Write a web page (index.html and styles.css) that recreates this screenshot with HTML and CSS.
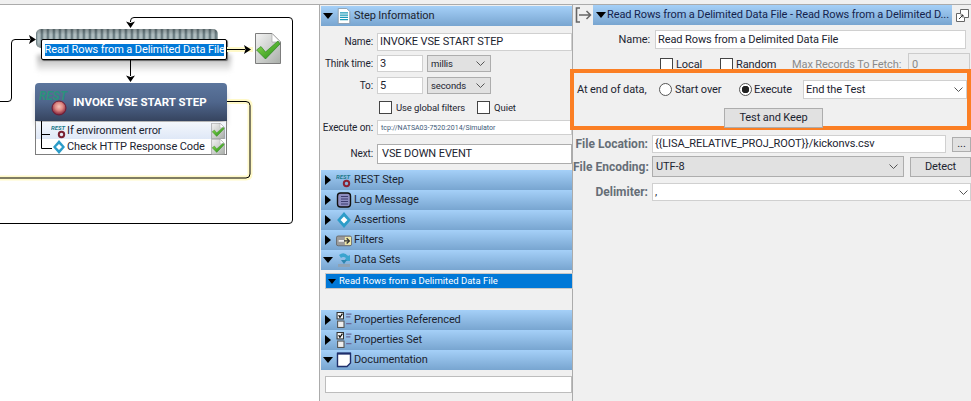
FILE: index.html
```html
<!DOCTYPE html>
<html lang="en">
<head>
<meta charset="utf-8">
<title>Step editor</title>
<link rel="stylesheet" href="styles.css">
</head>
<body>
<svg class="defs" width="0" height="0" aria-hidden="true">
  <defs>
    <linearGradient id="pageG" x1="0" y1="0" x2="1" y2="1"><stop offset="0" stop-color="#f4f4f4"/><stop offset="1" stop-color="#a9aea9"/></linearGradient>
    <linearGradient id="tickG" x1="0" y1="0" x2="1" y2="1"><stop offset="0" stop-color="#8fdc4e"/><stop offset="1" stop-color="#1f8a16"/></linearGradient>
    <radialGradient id="redG" cx="0.5" cy="0.4" r="0.6"><stop offset="0" stop-color="#f6c3b8"/><stop offset="0.45" stop-color="#e08a84"/><stop offset="1" stop-color="#7b1c35"/></radialGradient>
    <symbol id="ok" viewBox="0 0 26 31">
      <path d="M.5.5H17L25.5 9V30.5H.5Z" fill="url(#pageG)" stroke="#7d7d7d"/>
      <path d="M17 .5V9H25.5Z" fill="#fff" stroke="#9a9a9a" stroke-width=".6"/>
      <path d="M1.5 17L6 13.5 10.5 19 23 8 25 11 10.5 26Z" fill="url(#tickG)" stroke="#1f7a16" stroke-width=".6"/>
    </symbol>
    <symbol id="diamond" viewBox="0 0 12 14">
      <path d="M6 0L12 7 6 14 0 7Z" fill="#2c9cc8"/>
      <path d="M6 4L9 7 6 10 3 7Z" fill="#fff"/>
    </symbol>
    <symbol id="props" viewBox="0 0 14 15">
      <rect x=".5" y=".5" width="6" height="6" fill="#fff" stroke="#333"/>
      <path d="M2 3L3.2 5 5.5 1.5" fill="none" stroke="#111" stroke-width="1.2"/>
      <rect x="1" y="8.500" width="6" height="6" fill="#eee" stroke="#555"/>
      <path d="M9 2H14M9 4.500H13M9 11H14" stroke="#6a6a9a" stroke-width="1.200"/>
    </symbol>
  </defs>
</svg>
<div class="app">
  <main class="canvas">
    <div class="coil"></div>
    <div class="node-shadow"></div>
    <div class="node"><span class="node-sel">Read Rows from a Delimited Data File</span></div>
    <svg class="ok-big" aria-hidden="true"><use href="#ok"/></svg>

    <div class="rest">
      <div class="rest-head">
        <svg class="rest-logo" viewBox="0 0 40 34" aria-hidden="true">
          <text x="0" y="15" class="rest-word" textLength="28" lengthAdjust="spacingAndGlyphs">REST</text>
          <circle cx="20" cy="23" r="7" fill="url(#redG)" stroke="#6d1b33" stroke-width="1"/>
        </svg>
        <span class="rest-title">INVOKE VSE START STEP</span>
      </div>
      <div class="rest-list">
        <div class="rest-row rest-row-a">
          <svg class="rest-mini" viewBox="0 0 16 16" aria-hidden="true">
            <text x="0" y="7" class="rest-word-small">REST</text>
            <circle cx="10.500" cy="11.500" r="2.700" fill="none" stroke="#7b2233" stroke-width="2"/>
          </svg>
          <span>If environment error</span>
          <svg class="ok-small" aria-hidden="true"><use href="#ok"/></svg>
        </div>
        <div class="rest-row">
          <svg class="diamond-mini" aria-hidden="true"><use href="#diamond"/></svg>
          <span>Check HTTP Response Code</span>
          <svg class="ok-small" aria-hidden="true"><use href="#ok"/></svg>
        </div>
      </div>
    </div>

    <svg class="wires" width="319" height="396" viewBox="0 5 319 396" aria-hidden="true">
      <g fill="none" stroke="#fff9c8" stroke-width="5">
        <path d="M227 49.500H253"/>
        <path d="M227 101.500H246Q250 101.500 250 105.500V174Q250 178 246 178H0"/>
      </g>
      <g fill="none" stroke="#000" stroke-width="1">
        <path d="M0 101.500H8Q11.500 101.500 11.500 98V43Q11.500 39.500 15 39.500H30"/>
        <path d="M130.500 22V21Q130.500 17.500 134 17.500H289Q292.500 17.500 292.500 21V220Q292.500 223.500 289 223.500H0"/>
        <path d="M130.500 60V76"/>
        <path d="M227 49.500H245"/>
        <path d="M227 101.500H246Q250 101.500 250 105.500V174Q250 178 246 178H0"/>
        <path d="M41.500 121V148.500H52M41.500 134.500H50"/>
      </g>
      <path d="M29 35L36 39.500 29 44 30.500 39.500ZM126 21.500L130.500 28 135 21.500 130.500 23ZM126 75.500L130.500 82 135 75.500 130.500 77ZM244 45L251 49.500 244 54 245.500 49.500Z" fill="#000"/>
    </svg>
  </main>

  <section class="steps">
    <header class="bar bar-first">
      <i class="tri tri-down"></i>
      <svg class="bar-icon" viewBox="0 0 16 18" aria-hidden="true">
        <path d="M1.500.5H11L14.500 4V17.500H1.500Z" fill="#fff" stroke="#8a9aa8"/>
        <path d="M3.500 5.500H12.500M3.500 8H12.500M3.500 10.500H12.500M3.500 13H12.500" stroke="#1b9ab8" stroke-width="1.400"/>
      </svg>
      <span>Step Information</span>
    </header>
    <div class="info">
      <div class="row row-name"><label class="lab">Name:</label><div class="field grow">INVOKE VSE START STEP</div></div>
      <div class="row row-think"><label class="lab">Think time:</label><div class="field small">3</div><div class="pick">millis<svg class="chev" viewBox="0 0 9 5" aria-hidden="true"><path d="M.5.5L4.500 4.500 8.500.5"/></svg></div></div>
      <div class="row row-to"><label class="lab">To:</label><div class="field small">5</div><div class="pick">seconds<svg class="chev" viewBox="0 0 9 5" aria-hidden="true"><path d="M.5.5L4.500 4.500 8.500.5"/></svg></div></div>
      <div class="row row-checks"><i class="box box-a"></i><span>Use global filters</span><i class="box box-b"></i><span>Quiet</span></div>
      <div class="row row-exec"><label class="lab">Execute on:</label><div class="field grow tiny">tcp://NATSA03-7520:2014/Simulator</div></div>
      <div class="row row-next"><label class="lab">Next:</label><div class="field grow next">VSE DOWN EVENT</div></div>
    </div>
    <header class="bar"><i class="tri"></i>
      <svg class="bar-icon" viewBox="0 0 16 16" aria-hidden="true"><text x="0" y="7" class="rest-word-small">REST</text><circle cx="10.500" cy="11.500" r="2.700" fill="none" stroke="#8a2233" stroke-width="2"/></svg>
      <span>REST Step</span></header>
    <header class="bar"><i class="tri"></i>
      <svg class="bar-icon" viewBox="0 0 16 16" aria-hidden="true"><rect x="1.500" y="1" width="13" height="14" rx="3" fill="#8d8dc0" stroke="#111" stroke-width="1.400"/><path d="M5 4.500H12M5 7H12M5 9.500H12M5 12H12" stroke="#3d3d70"/></svg>
      <span>Log Message</span></header>
    <header class="bar"><i class="tri"></i>
      <svg class="bar-icon" aria-hidden="true"><use href="#diamond"/></svg>
      <span>Assertions</span></header>
    <header class="bar"><i class="tri"></i>
      <svg class="bar-icon" viewBox="0 0 18 14" aria-hidden="true"><rect x=".5" y="2.500" width="17" height="11" rx="2" fill="#9b9b9b" stroke="#666"/><rect x="10" y="3.500" width="7" height="9" fill="#efe9a8"/><path d="M3 8H9" stroke="#eee" stroke-width="2"/><path d="M9 8H14M12 5L15 8 12 11" fill="none" stroke="#333" stroke-width="1.500"/></svg>
      <span>Filters</span></header>
    <header class="bar"><i class="tri tri-down"></i>
      <svg class="bar-icon" viewBox="0 0 16 16" aria-hidden="true"><path d="M2 12H14V15H2Z" fill="#8fa3b5"/><path d="M3 3Q8 -1 12 4L14 3V9H8L10 6Q7 4 5 6Z" fill="#3aa4cf"/><path d="M5 8L8 12 11 8Z" fill="#2e86b0"/></svg>
      <span>Data Sets</span></header>
    <div class="sets">
      <div class="set-row"><i class="tri tri-down tri-set"></i><span>Read Rows from a Delimited Data File</span></div>
    </div>
    <header class="bar"><i class="tri"></i><svg class="bar-icon" aria-hidden="true"><use href="#props"/></svg><span>Properties Referenced</span></header>
    <header class="bar"><i class="tri"></i><svg class="bar-icon" aria-hidden="true"><use href="#props"/></svg><span>Properties Set</span></header>
    <header class="bar"><i class="tri tri-down"></i>
      <svg class="bar-icon" viewBox="0 0 16 16" aria-hidden="true"><path d="M1.500 1.500H14.500V11L11 14.500H1.500Z" fill="#fff" stroke="#1f2f6b" stroke-width="1.400"/><path d="M1 1.500H15" stroke="#1f2f6b" stroke-width="2"/></svg>
      <span>Documentation</span></header>
    <div class="doc"><div class="doc-field"></div></div>
  </section>

  <section class="detail">
    <div class="detail-top">
      <svg class="collapse" viewBox="0 0 17 16" aria-hidden="true"><path d="M5 1H1.500V15H5" fill="none" stroke="#666" stroke-width="1.600"/><path d="M4 8H15.500M11.500 4L15.500 8 11.500 12" fill="none" stroke="#666" stroke-width="1.500"/></svg>
      <div class="detail-bar"><i class="tri tri-down"></i><span class="detail-title">Read Rows from a Delimited Data File - Read Rows from a Delimited D...</span></div>
      <svg class="popout" viewBox="0 0 13 13" aria-hidden="true"><path d="M.5 4.500H8.500V12.500H.5Z" fill="#fff" stroke="#666"/><path d="M4.500 4V.5H12.500V8.500H9" fill="#fff" stroke="#666"/><path d="M3 10L7 6M4.500 6H7V8.500" fill="none" stroke="#333"/></svg>
    </div>
    <div class="d-name"><label class="d-lab">Name:</label><div class="field d-name-field">Read Rows from a Delimited Data File</div></div>
    <div class="d-checks">
      <i class="box"></i><span class="d-local">Local</span><i class="box"></i><span class="d-random">Random</span>
      <span class="muted">Max Records To Fetch:</span><div class="max-field">0</div>
    </div>
    <div class="callout">
      <div class="callout-row">
        <span class="end-label">At end of data,</span>
        <i class="radio"></i><span class="r-start">Start over</span>
        <i class="radio radio-on"></i><span class="r-exec">Execute</span>
        <div class="field end-pick">End the Test<svg class="chev" viewBox="0 0 9 5" aria-hidden="true"><path d="M.5.5L4.500 4.500 8.500.5"/></svg></div>
      </div>
      <div class="callout-btn"><div class="btn test-btn">Test and Keep</div></div>
    </div>
    <div class="f-row f-loc"><label class="f-lab">File Location:</label><div class="field f-path">{{LISA_RELATIVE_PROJ_ROOT}}/kickonvs.csv</div><div class="btn dots">...</div></div>
    <div class="f-row f-enc"><label class="f-lab">File Encoding:</label><div class="pick f-utf">UTF-8<svg class="chev" viewBox="0 0 9 5" aria-hidden="true"><path d="M.5.5L4.500 4.500 8.500.5"/></svg></div><div class="btn detect">Detect</div></div>
    <div class="f-row f-del"><label class="f-lab">Delimiter:</label><div class="field f-delim">,<svg class="chev" viewBox="0 0 9 5" aria-hidden="true"><path d="M.5.5L4.500 4.500 8.500.5"/></svg></div></div>
  </section>
</div>
</body>
</html>
```
FILE: styles.css
```css
* { box-sizing: border-box; }
html, body { margin: 0; height: 100%; }
body { background: #f0f0f0; font: 11px/14px Roboto, "Liberation Sans", sans-serif; letter-spacing: -0.1px; color: #1c2430; overflow: hidden; }
.defs { position: absolute; }
.app { display: flex; width: 971px; height: 401px; overflow: hidden; padding-top: 4px; }

/* Diagram canvas */
.canvas { position: relative; flex: 0 0 320px; height: 397px; background: #fff; border-top: 1px solid #ababab; border-right: 1px solid #ababab; overflow: hidden; }
.wires { position: absolute; left: 0; top: 0; pointer-events: none; }
.coil { position: absolute; left: 36px; top: 24px; width: 182px; height: 19px; border-radius: 5px; background: linear-gradient(rgba(0, 0, 0, .25), transparent 30%, transparent 70%, rgba(0, 0, 0, .25)), repeating-linear-gradient(90deg, #5d7076 0, #9cadb0 1.500px, #b9c6c8 3px, #8a9b9f 5px, #4f6066 6px); }
.node-shadow { position: absolute; left: 37px; top: 50px; width: 194px; height: 18px; background: linear-gradient(#b0b0b0, #fff); filter: blur(2px); }
.node { position: absolute; left: 41px; top: 34px; width: 186px; height: 21px; background: #fff; border: 1px solid #000; border-radius: 2px; box-shadow: 1px 1px 1px #666; display: flex; align-items: center; justify-content: center; }
.node-sel { background: #0078d7; color: #fff; line-height: 12px; height: 12px; width: 179px; white-space: nowrap; text-align: center; }
.ok-big { position: absolute; left: 255px; top: 28px; width: 26px; height: 31px; }
.rest { position: absolute; left: 35px; top: 78px; width: 192px; }
.rest-head { display: flex; align-items: center; height: 38px; border-radius: 4px 4px 0 0; background: linear-gradient(#5c769d, #4f668c 50%, #36445f); box-shadow: 0 6px 6px -2px #aaa; position: relative; }
.rest-logo { width: 40px; height: 34px; margin-left: 4px; flex: none; }
.rest-word { font: italic bold 13px Roboto, sans-serif; fill: #2a917c; letter-spacing: 0; }
.rest-word-small { font: italic bold 6px Roboto, sans-serif; fill: #1f7a8c; letter-spacing: 0; }
.rest-title { margin-left: -6px; font-weight: bold; font-size: 11.500px; color: #fff; white-space: nowrap; letter-spacing: 0; }
.rest-list { height: 34px; border: 1px solid #7d7d7d; border-top: 0; background: #fff; padding-top: 1px; }
.rest-row { display: flex; align-items: center; height: 16px; padding-left: 15px; white-space: nowrap; position: relative; }
.rest-row-a { height: 17px; background: linear-gradient(#f4f7fc, #dfe8f7); }
.rest-mini { width: 16px; height: 16px; flex: none; }
.diamond-mini { width: 12px; height: 14px; flex: none; margin-left: 2px; margin-right: 2px; }
.ok-small { width: 14px; height: 16px; margin-left: auto; margin-right: 1px; flex: none; }

/* Step sections */
.steps { flex: 0 0 253px; height: 397px; padding: 1px 0 0 1px; border-top: 1px solid #ababab; border-right: 1px solid #ababab; display: flex; flex-direction: column; }
.bar { flex: none; display: flex; align-items: center; height: 20px; background: linear-gradient(#a5d0f8, #78a5d0); white-space: nowrap; }
.tri { flex: none; width: 0; height: 0; border-style: solid; border-color: transparent transparent transparent #000; border-width: 5px 0 5px 6px; margin: 0 5px 0 4px; }
.tri-down { border-color: #000 transparent transparent transparent; border-width: 6px 5px 0 5px; margin: 0 3px 0 2px; }
.bar-icon { flex: none; width: 16px; height: 16px; margin-right: 2px; }
.info { flex: none; height: 144px; padding-top: 7px; }
.row { display: flex; align-items: center; }
.lab { flex: none; width: 52px; font-size: 10px; text-align: right; margin-right: 4px; white-space: nowrap; }
.field { background: #fff; border: 1px solid #d0d0d0; padding: 0 2px; white-space: nowrap; display: flex; align-items: center; }
.grow { flex: 1; height: 100%; }
.small { width: 46px; height: 100%; }
.pick { display: flex; align-items: center; justify-content: space-between; background: #e1e1e1; border: 1px solid #adadad; padding: 0 5px 0 3px; white-space: nowrap; }
.row-think .pick, .row-to .pick { width: 64px; height: 100%; margin-left: 4px; font-size: 9.500px; }
.chev { width: 9px; height: 5px; flex: none; fill: none; stroke: #555; }
.row-name { height: 18px; }
.row-think { height: 17px; margin-top: 4px; }
.row-to { height: 17px; margin-top: 5px; }
.row-checks { height: 13px; margin-top: 7px; font-size: 9.500px; }
.box { flex: none; display: block; width: 13px; height: 13px; background: #fff; border: 1px solid #444; }
.box-a { margin-left: 58px; margin-right: 4px; }
.box-b { margin-left: 12px; margin-right: 4px; }
.row-exec { height: 15px; margin-top: 6px; }
.tiny { font-size: 7px; letter-spacing: 0; color: #3c5a78; padding-left: 3px; }
.row-next { height: 20px; margin-top: 9px; }
.next { border-color: #adadad; padding-left: 4px; }
.sets { flex: none; height: 40px; padding: 4px 0 0 5px; }
.set-row { height: 14px; display: flex; align-items: center; background: #0078d7; color: #fff; font-size: 9.500px; letter-spacing: 0; outline: 1px solid #c8c8c8; white-space: nowrap; }
.tri-set { border-width: 5px 4px 0 4px; margin: 0 3px 0 2px; }
.doc { flex: none; padding: 6px 0 0 4px; }
.doc-field { height: 17px; background: #fff; border: 1px solid #bdbdbd; }

/* Detail panel */
.detail { flex: 1; min-width: 0; height: 397px; border-top: 1px solid #ababab; }
.detail-top { display: flex; align-items: center; height: 20px; }
.collapse { flex: none; width: 17px; height: 16px; margin: 0 1px 0 2px; }
.detail-bar { flex: none; width: 359px; height: 20px; display: flex; align-items: center; background: linear-gradient(#a5d0f8, #78a5d0); }
.detail-bar .tri-down { margin: 0 1px 0 3px; }
.detail-title { white-space: nowrap; color: #14234d; }
.popout { flex: none; width: 13px; height: 13px; margin-left: 4px; }
.d-name { display: flex; align-items: center; height: 19px; margin-top: 5px; }
.d-lab { width: 77px; text-align: right; }
.d-name-field { width: 311px; height: 100%; margin-left: 5px; }
.d-checks { display: flex; align-items: flex-start; height: 22px; margin-top: 4px; padding-top: 5px; }
.d-checks .box:first-child { margin-left: 87px; }
.d-local { margin: 0 0 0 3px; width: 44px; }
.d-random { margin-left: 3px; width: 56px; }
.muted { color: #8a8a8a; white-space: nowrap; width: 116px; }
.max-field { width: 62px; height: 22px; margin-top: -5px; background: #eee; border: 1px solid #ccc; color: #888; padding: 4px 3px; }
.callout { position: relative; height: 61px; margin: -6px 0 0 -3px; border: 4px solid #fb7f24; background: #f0f0f0; }
.callout-row { display: flex; align-items: center; height: 19px; margin-top: 7px; }
.end-label { margin-left: 3px; width: 82px; white-space: nowrap; }
.radio { flex: none; display: block; width: 13px; height: 13px; border-radius: 50%; border: 1px solid #555; background: #fff; }
.radio-on { background: radial-gradient(circle, #222 0 3.500px, #fff 4px); }
.r-start { margin-left: 3px; width: 64px; }
.r-exec { margin-left: 2px; width: 49px; }
.end-pick { flex: 1; height: 100%; justify-content: space-between; padding-right: 3px; }
.callout-btn { display: flex; justify-content: flex-start; margin-top: 9px; padding-left: 150px; }
.btn { display: flex; align-items: center; justify-content: center; background: #e1e1e1; border: 1px solid #adadad; white-space: nowrap; }
.test-btn { width: 99px; height: 20px; }
.f-row { display: flex; align-items: center; white-space: nowrap; }
.f-lab { flex: none; width: 75px; font-size: 12px; letter-spacing: 0; text-align: right; font-weight: bold; color: #666e77; margin-right: 4px; }
.f-loc { height: 18px; margin-top: 5px; }
.f-path { width: 294px; height: 100%; }
.dots { width: 19px; height: 15px; margin-left: 6px; }
.f-enc { height: 21px; margin-top: 3px; }
.f-utf { width: 252px; height: 100%; padding-right: 5px; }
.detect { width: 61px; height: 20px; margin-left: 6px; }
.f-del { height: 18px; margin-top: 6px; }
.f-delim { flex: 1; height: 100%; justify-content: space-between; }
```
